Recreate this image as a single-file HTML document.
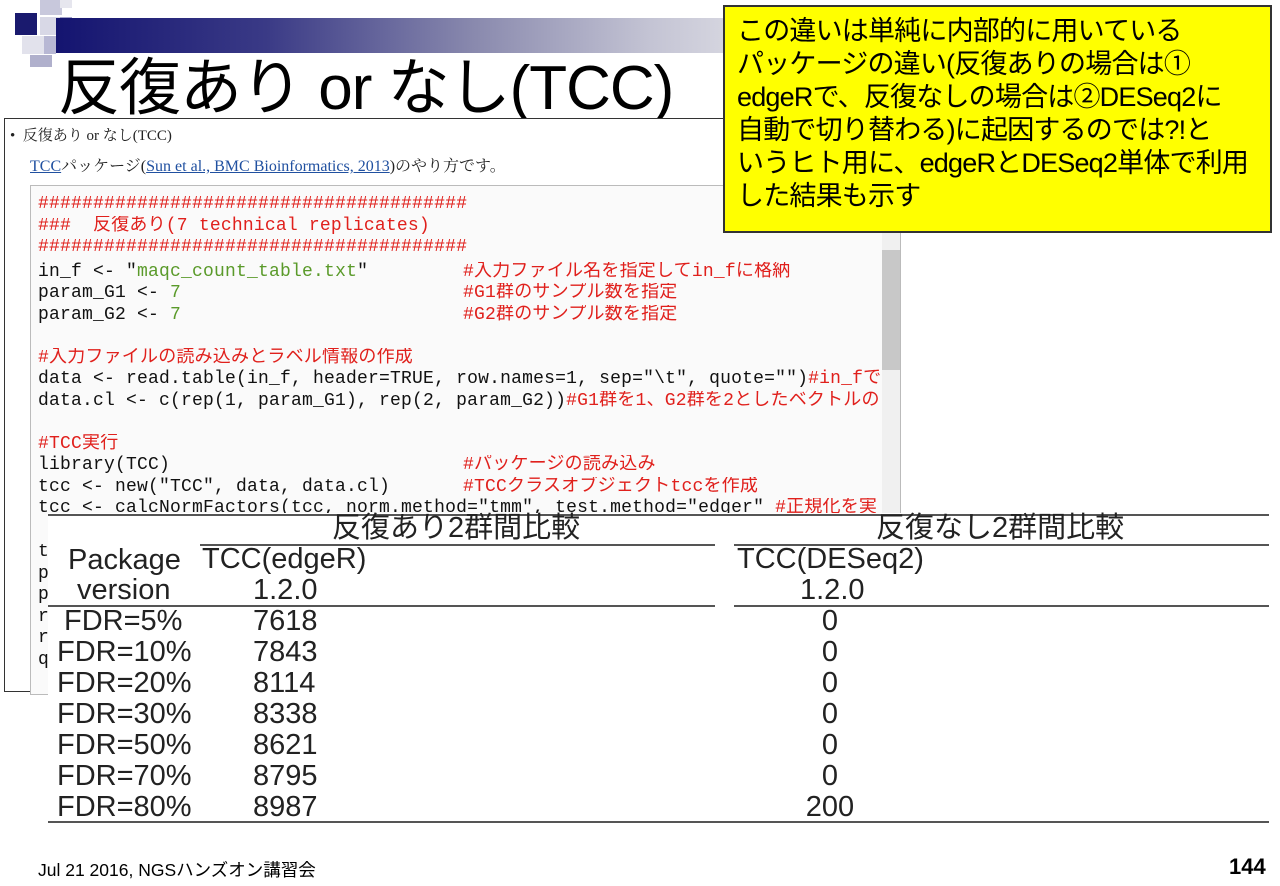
<!DOCTYPE html>
<html><head><meta charset="utf-8"><style>
*{margin:0;padding:0;box-sizing:border-box}
body{width:1280px;height:886px;background:#fff;position:relative;overflow:hidden;font-family:"Liberation Sans","Noto Sans CJK JP",sans-serif}
.a{position:absolute;white-space:nowrap}
.sq{position:absolute}
.code{font-family:"Liberation Mono","Noto Sans CJK JP",monospace;font-size:18px;line-height:21.5px;color:#111;letter-spacing:0.2px}
.code div{height:21.5px;overflow:hidden}
.c1{display:inline-block;width:425px}
.r{color:#e0201c}.g{color:#5a9a2a}
.t{font-family:"Liberation Sans Narrow","Liberation Sans","Noto Sans CJK JP",sans-serif;font-size:29px;color:#222;line-height:31px}
.ln{position:absolute;height:2px;background:#555}
</style></head><body>
<div class="sq" style="left:15px;top:13px;width:22px;height:22px;background:#1a1a6e"></div>
<div class="sq" style="left:40px;top:0;width:22px;height:15px;background:#c8c8dc"></div>
<div class="sq" style="left:60px;top:0;width:12px;height:8px;background:#e6e6ee"></div>
<div class="sq" style="left:40px;top:17px;width:20px;height:18px;background:#d8d8e6"></div>
<div class="sq" style="left:60px;top:17px;width:12px;height:18px;background:#a0a0c8"></div>
<div class="sq" style="left:22px;top:36px;width:22px;height:18px;background:#e2e2ec"></div>
<div class="sq" style="left:44px;top:36px;width:12px;height:18px;background:#b8b8d4"></div>
<div class="sq" style="left:30px;top:55px;width:22px;height:12px;background:#b0b0cc"></div>
<div class="sq" style="left:56px;top:18px;width:700px;height:35px;background:linear-gradient(90deg,#141470 0%,#3a3a86 30%,#8a8aae 60%,#c4c4d4 85%,#dcdce4 100%)"></div>
<div class="a" style="left:58px;top:54px;font-size:62px;line-height:70px;color:#000;letter-spacing:-1px">反復あり or なし(TCC)</div>

<div class="a" style="left:4px;top:118px;width:897px;height:574px;border:1px solid #333;background:#fff"></div>
<div class="a" style="left:10px;top:124px;font-family:'Liberation Serif','Noto Serif CJK SC',serif;font-size:15px;color:#222">•&nbsp; 反復あり or なし(TCC)</div>
<div class="a" style="left:30px;top:153px;font-family:'Liberation Serif','Noto Serif CJK SC',serif;font-size:16px;color:#222"><span style="color:#2050a0;text-decoration:underline">TCC</span>パッケージ(<span style="color:#2050a0;text-decoration:underline">Sun et al., BMC Bioinformatics, 2013</span>)のやり方です。</div>
<div class="a" style="left:30px;top:185px;width:871px;height:510px;border:1px solid #bbb;background:#fafafa"></div>
<div class="a" style="left:882px;top:186px;width:18px;height:330px;background:#f0f0f0"></div>
<div class="a" style="left:882px;top:250px;width:18px;height:120px;background:#c8c8c8"></div>
<div class="a code" style="left:38px;top:194px;width:844px">
<div class="r">#######################################</div>
<div class="r">###&nbsp; 反復あり(7 technical replicates)</div>
<div class="r">#######################################</div>
<div style="height:3px"></div>
<div><span class="c1">in_f &lt;- "<span class="g">maqc_count_table.txt</span>"</span><span class="r">#入力ファイル名を指定してin_fに格納</span></div>
<div><span class="c1">param_G1 &lt;- <span class="g">7</span></span><span class="r">#G1群のサンプル数を指定</span></div>
<div><span class="c1">param_G2 &lt;- <span class="g">7</span></span><span class="r">#G2群のサンプル数を指定</span></div>
<div>&nbsp;</div>
<div class="r">#入力ファイルの読み込みとラベル情報の作成</div>
<div>data &lt;- read.table(in_f, header=TRUE, row.names=1, sep="\t", quote="")<span class="r">#in_fで指</span></div>
<div>data.cl &lt;- c(rep(1, param_G1), rep(2, param_G2))<span class="r">#G1群を1、G2群を2としたベクトルの</span></div>
<div>&nbsp;</div>
<div class="r">#TCC実行</div>
<div><span class="c1">library(TCC)</span><span class="r">#パッケージの読み込み</span></div>
<div><span class="c1">tcc &lt;- new("TCC", data, data.cl)</span><span class="r">#TCCクラスオブジェクトtccを作成</span></div>
<div>tcc &lt;- calcNormFactors(tcc, norm.method="tmm", test.method="edger" <span class="r">#正規化を実</span></div>
</div>
<div class="a" style="left:38px;top:542px;font-family:'Liberation Mono',monospace;font-size:18px;line-height:21.5px;color:#111">t<br>p<br>p<br>r<br>r<br>q</div>

<div class="a" style="left:723px;top:5px;width:549px;height:228px;background:#ffff00;border:2px solid #333;padding:8px 0 0 12px;font-size:27px;line-height:33px;color:#000;letter-spacing:-0.8px;overflow:hidden">この違いは単純に内部的に用いている<br>パッケージの違い(反復ありの場合は①<br>edgeRで、反復なしの場合は②DESeq2に<br>自動で切り替わる)に起因するのでは?!と<br>いうヒト用に、edgeRとDESeq2単体で利用<br>した結果も示す</div>

<div class="a" style="left:48px;top:513px;width:1221px;height:312px;background:#fff"></div>
<div class="ln" style="left:48px;top:514px;width:1221px"></div>
<div class="ln" style="left:200px;top:544px;width:515px"></div>
<div class="ln" style="left:734px;top:544px;width:535px"></div>
<div class="ln" style="left:48px;top:605px;width:667px"></div>
<div class="ln" style="left:734px;top:605px;width:535px"></div>
<div class="ln" style="left:48px;top:821px;width:1221px"></div>
<div class="a t" style="left:332px;top:513px">反復あり2群間比較</div>
<div class="a t" style="left:876px;top:513px">反復なし2群間比較</div>
<div class="a t" style="left:68px;top:545px">Package</div>
<div class="a t" style="left:202px;top:544px">TCC(edgeR)</div>
<div class="a t" style="left:737px;top:544px">TCC(DESeq2)</div>
<div class="a t" style="left:77px;top:575px">version</div>
<div class="a t" style="left:253px;top:575px">1.2.0</div>
<div class="a t" style="left:800px;top:575px">1.2.0</div>
<div class="a t" style="left:64px;top:606px">FDR=5%</div>
<div class="a t" style="left:57px;top:637px;line-height:31px">FDR=10%<br>FDR=20%<br>FDR=30%<br>FDR=50%<br>FDR=70%<br>FDR=80%</div>
<div class="a t" style="left:253px;top:606px">7618<br>7843<br>8114<br>8338<br>8621<br>8795<br>8987</div>
<div class="a t" style="left:780px;top:606px;width:100px;text-align:center">0<br>0<br>0<br>0<br>0<br>0<br>200</div>

<div class="a" style="left:38px;top:857px;font-size:17.5px;color:#000">Jul 21 2016, NGSハンズオン講習会</div>
<div class="a" style="left:1229px;top:854px;font-size:22px;font-weight:bold;color:#000">144</div>
</body></html>
